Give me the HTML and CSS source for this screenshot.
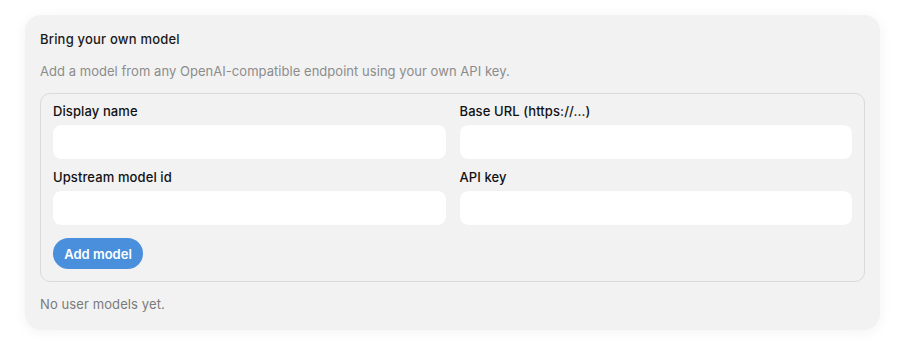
FILE: index.html
```html
<!DOCTYPE html>
<html>
<head>
<meta charset="utf-8">
<link rel="stylesheet" href="styles.css">
</head>
<body>
<div class="page">
  <section class="card">
    <h2 class="title">Bring your own model</h2>
    <p class="desc">Add a model from any OpenAI-compatible endpoint using your own API key.</p>
    <form class="box">
      <div class="grid">
        <label class="field"><span class="label">Display name</span><input class="input" type="text"></label>
        <label class="field"><span class="label">Base URL (https://...)</span><input class="input" type="text"></label>
        <label class="field"><span class="label">Upstream model id</span><input class="input" type="text"></label>
        <label class="field"><span class="label">API key</span><input class="input" type="password"></label>
      </div>
      <button class="btn" type="button">Add model</button>
    </form>
    <p class="empty">No user models yet.</p>
  </section>
</div>
</body>
</html>
```
FILE: styles.css
```css
* { box-sizing: border-box; }
html, body { margin: 0; background: #ffffff; }
body {
  font-family: Inter, "Noto Sans", "Liberation Sans", sans-serif;
  font-size: 13px;
  line-height: 16px;
  color: #1a1a1a;
}
.page { padding: 15px 20px 20px 25px; }
.card {
  background: #f2f2f2;
  border-radius: 16px;
  padding: 16px 15px 18px 15px;
  box-shadow: 0 2px 14px rgba(0,0,0,0.05);
}
.title {
  margin: 0;
  font-size: 13px;
  font-weight: 500;
  line-height: 16px;
  letter-spacing: 0.2px;
  color: #1a1a1a;
}
.desc {
  margin: 16px 0 14px;
  color: #8c8c8c;
  letter-spacing: 0.04px;
}
.box {
  margin: 0;
  border: 1px solid #dadada;
  border-radius: 10px;
  padding: 9px 12px 12px 12px;
}
.grid {
  display: grid;
  grid-template-columns: 1fr 1fr;
  column-gap: 14px;
  row-gap: 10px;
}
.field { display: flex; flex-direction: column; gap: 6px; }
.label { font-weight: 500; color: #111; letter-spacing: 0.1px; }
.input {
  height: 34px;
  border: none;
  border-radius: 8px;
  background: #ffffff;
  box-shadow: 0 0 1px rgba(0,0,0,0.06);
  font: inherit;
  padding: 0 10px;
  outline: none;
}
.btn {
  margin-top: 13px;
  height: 31px;
  width: 90px;
  border: none;
  border-radius: 16px;
  background: #4a8fdc;
  color: #ffffff;
  font: inherit;
  font-weight: 600;
  padding: 0;
}
.empty {
  margin: 14px 0 0;
  color: #7a7a7a;
  letter-spacing: 0.1px;
}
```
